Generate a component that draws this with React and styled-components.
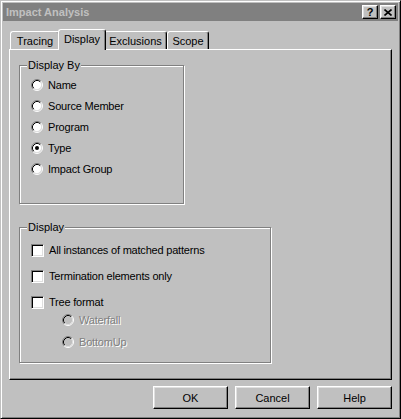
import React from "react";
import styled, { createGlobalStyle, css } from "styled-components";

const GlobalStyle = createGlobalStyle`
  html, body { margin: 0; padding: 0; background: #c0c0c0; }
  body { font-family: "Liberation Sans", Arial, sans-serif; font-size: 11px; color: #000; }
  * { box-sizing: border-box; }
`;

const raised = css`
  border: 1px solid;
  border-color: #fff #000 #000 #fff;
  box-shadow: inset -1px -1px #808080, inset 1px 1px #dfdfdf;
`;

const Window = styled.div`
  width: 401px;
  height: 419px;
  background: #c0c0c0;
  border: 1px solid;
  border-color: #c0c0c0 #000 #000 #c0c0c0;
  box-shadow: inset 1px 1px #fff, inset -1px -1px #808080;
  padding: 2px;
  display: flex;
  flex-direction: column;
`;

const TitleBar = styled.div`
  height: 18px;
  background: #808080;
  display: flex;
  align-items: center;
  padding: 0 2px 0 3px;
  gap: 2px;
`;

const Title = styled.span`
  flex: 1;
  font-weight: bold;
  font-size: 11px;
  color: #c0c0c0;
`;

const CaptionButton = styled.div`
  width: 16px;
  height: 14px;
  background: #c0c0c0;
  ${raised};
  display: flex;
  align-items: center;
  justify-content: center;
  font-weight: bold;
  font-size: 11px;
  line-height: 12px;
`;

const Body = styled.div`
  padding: 8px 6px 0 6px;
  display: flex;
  flex-direction: column;
`;

const TabStrip = styled.div`
  height: 20px;
  display: flex;
  align-items: flex-end;
  padding-left: 1px;
`;

const Tab = styled.div`
  width: ${(p) => p.$w}px;
  height: ${(p) => (p.$active ? 21 : 18)}px;
  background: #c0c0c0;
  border-top: 1px solid #fff;
  border-left: 1px solid #fff;
  border-right: 1px solid #000;
  box-shadow: inset -1px 0 #808080;
  border-radius: 3px 3px 0 0;
  display: flex;
  align-items: center;
  justify-content: center;
  ${(p) =>
    p.$active &&
    css`
      margin: 0 -2px -1px -2px;
      padding-bottom: 2px;
      position: relative;
      z-index: 1;
    `}
`;

const Panel = styled.div`
  height: 331px;
  border: 1px solid;
  border-color: #fff #000 #000 #fff;
  box-shadow: inset -1px -1px #808080;
  padding: 15px 0 0 9px;
  display: flex;
  flex-direction: column;
`;

const Group = styled.div`
  width: ${(p) => p.$w}px;
  height: ${(p) => p.$h}px;
  margin-top: ${(p) => p.$mt || 0}px;
  border: 1px solid #808080;
  box-shadow: inset 1px 1px #fff, 1px 1px #fff;
  display: flex;
  flex-direction: column;
`;

const Legend = styled.span`
  align-self: flex-start;
  margin: -7px 0 0 7px;
  padding: 0 1px;
  height: 13px;
  line-height: 13px;
  background: #c0c0c0;
`;

const List = styled.div`
  display: flex;
  flex-direction: column;
  gap: ${(p) => p.$gap}px;
  padding-top: ${(p) => p.$pt || 0}px;
  padding-left: ${(p) => p.$pl}px;
`;

const Row = styled.div`
  height: 16px;
  display: flex;
  align-items: center;
  gap: 5px;
  white-space: nowrap;
`;

const Label = styled.span`
  letter-spacing: -0.2px;
  ${(p) =>
    p.$disabled &&
    css`
      color: #808080;
      text-shadow: 1px 1px #fff;
    `}
`;

const CheckBox = styled.span`
  width: 13px;
  height: 13px;
  flex-shrink: 0;
  background: #fff;
  border: 1px solid;
  border-color: #808080 #fff #fff #808080;
  box-shadow: inset 1px 1px #000, inset -1px -1px #dfdfdf;
`;

const RadioSvg = styled.svg`
  flex-shrink: 0;
  display: block;
`;

const Radio = ({ checked, disabled }) => (
  <RadioSvg width="12" height="12" viewBox="0 0 12 12">
    <circle cx="6" cy="6" r="4.5" fill={disabled ? "#c0c0c0" : "#fff"} />
    <path d="M2.11 9.89 A5.5 5.5 0 0 1 9.89 2.11" stroke="#808080" fill="none" />
    <path d="M9.89 2.11 A5.5 5.5 0 0 1 2.11 9.89" stroke="#fff" fill="none" />
    <path d="M2.82 9.18 A4.5 4.5 0 0 1 9.18 2.82" stroke="#000" fill="none" />
    <path d="M9.18 2.82 A4.5 4.5 0 0 1 2.82 9.18" stroke="#dfdfdf" fill="none" />
    {checked && <circle cx="6" cy="6" r="2" fill="#000" />}
  </RadioSvg>
);

const ButtonRow = styled.div`
  margin-top: 6px;
  display: flex;
  justify-content: flex-end;
  gap: 7px;
`;

const Button = styled.div`
  width: 75px;
  height: 23px;
  background: #c0c0c0;
  ${raised};
  display: flex;
  align-items: center;
  justify-content: center;
`;

const tabs = [
  { label: "Tracing", w: 50 },
  { label: "Display", w: 48, active: true },
  { label: "Exclusions", w: 63 },
  { label: "Scope", w: 42 },
];

const displayBy = ["Name", "Source Member", "Program", "Type", "Impact Group"];
const checks = ["All instances of matched patterns", "Termination elements only", "Tree format"];

export default function App() {
  return (
    <>
      <GlobalStyle />
      <Window>
        <TitleBar>
          <Title>Impact Analysis</Title>
          <CaptionButton>?</CaptionButton>
          <CaptionButton>
            <svg width="8" height="7" viewBox="0 0 8 7">
              <path d="M0.5 0.5 L7.5 6.5 M7.5 0.5 L0.5 6.5" stroke="#000" strokeWidth="1.6" />
            </svg>
          </CaptionButton>
        </TitleBar>
        <Body>
          <TabStrip>
            {tabs.map((t) => (
              <Tab key={t.label} $w={t.w} $active={t.active}>
                {t.label}
              </Tab>
            ))}
          </TabStrip>
          <Panel>
            <Group $w={165} $h={139}>
              <Legend>Display By</Legend>
              <List $gap={5} $pt={5} $pl={11}>
                {displayBy.map((l) => (
                  <Row key={l}>
                    <Radio checked={l === "Type"} />
                    <Label>{l}</Label>
                  </Row>
                ))}
              </List>
            </Group>
            <Group $w={252} $h={136} $mt={23}>
              <Legend>Display</Legend>
              <List $gap={10} $pt={8} $pl={11}>
                {checks.map((l) => (
                  <Row key={l}>
                    <CheckBox />
                    <Label>{l}</Label>
                  </Row>
                ))}
              </List>
              <List $gap={6} $pt={2} $pl={42}>
                {["Waterfall", "BottomUp"].map((l) => (
                  <Row key={l}>
                    <Radio disabled />
                    <Label $disabled>{l}</Label>
                  </Row>
                ))}
              </List>
            </Group>
          </Panel>
          <ButtonRow>
            <Button>OK</Button>
            <Button>Cancel</Button>
            <Button>Help</Button>
          </ButtonRow>
        </Body>
      </Window>
    </>
  );
}
